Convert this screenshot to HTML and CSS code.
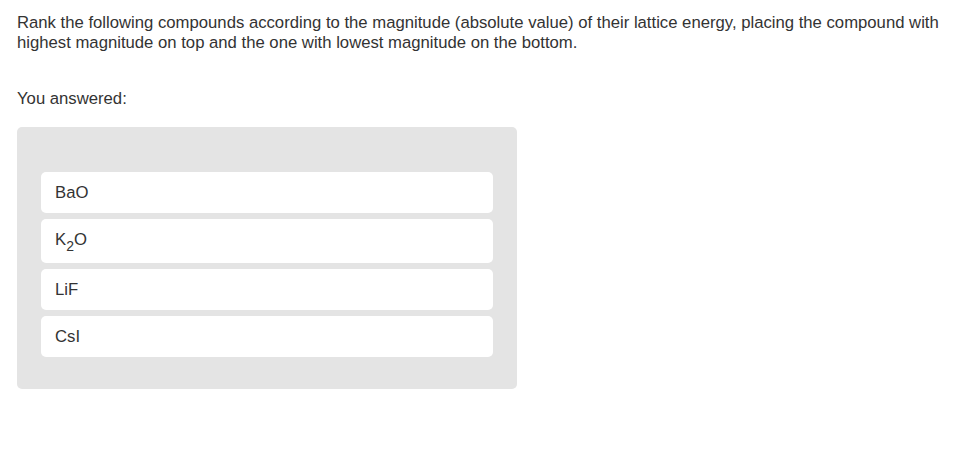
FILE: index.html
```html
<!DOCTYPE html>
<html>
<head>
    <title>Ranking question</title>
    <meta charset="utf-8">
    <link rel="stylesheet" href="styles.css">
</head>
<body>
    <div class="question">
        <p class="prompt">Rank the following compounds according to the magnitude (absolute value) of their lattice energy, placing the compound with highest magnitude on top and the one with lowest magnitude on the bottom.</p>

        <p class="answered">You answered:</p>

        <div class="rank-box">
            <div class="rank-item">BaO</div>
            <div class="rank-item">K<sub>2</sub>O</div>
            <div class="rank-item">LiF</div>
            <div class="rank-item">CsI</div>
        </div>
    </div>
</body>
</html>
```

FILE: styles.css
```css
body {
    margin: 0;
    font-family: "Liberation Sans", Arial, sans-serif;
    font-size: 16.7px;
    color: #333;
    background-color: white;
}
.question {
    padding: 13px 17px;
}
.prompt {
    margin: 0;
    line-height: 20px;
    max-width: 940px;
}
.answered {
    margin: 36px 0 18px;
    line-height: 20px;
}
.rank-box {
    width: 452px;
    background-color: #e4e4e4;
    border-radius: 5px;
    padding: 45px 24px 32px;
    display: flex;
    flex-direction: column;
    gap: 6px;
}
.rank-item {
    background-color: white;
    border-radius: 5px;
    padding: 10px 14px;
    line-height: 21px;
}
.rank-item sub {
    font-size: 14px;
    line-height: 14px;
    vertical-align: -6px;
}
```
